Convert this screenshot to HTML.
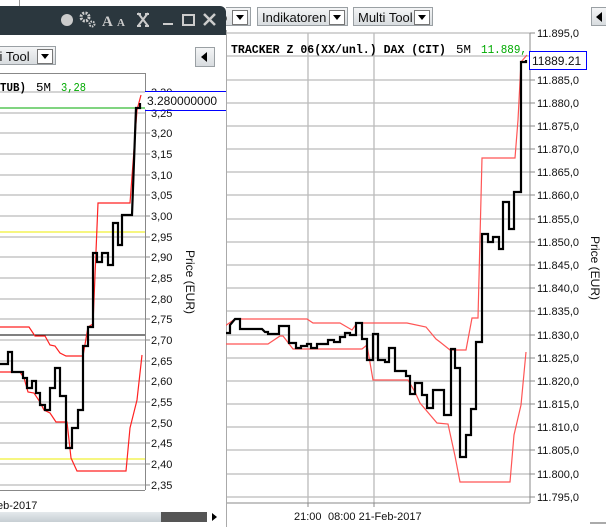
<!DOCTYPE html>
<html><head><style>
body{margin:0;width:606px;height:527px;overflow:hidden;background:#fff;font-family:"Liberation Sans",sans-serif;position:relative}
.a{position:absolute}
.btn{position:absolute;height:19px;border:1px solid #9aa0a4;background:linear-gradient(#f4f5f6,#d8dcdf);font-size:13px;line-height:19px;padding-left:4px;box-sizing:border-box;color:#111}
.dd{position:absolute;right:2px;top:2px;width:14px;height:13px;border:1px solid #777;background:#fff}
.dd:after{content:"";position:absolute;left:3px;top:4px;border:4px solid transparent;border-top:5px solid #000}
</style></head><body>
<div class="a" style="left:19px;top:0;width:1px;height:6px;background:#999"></div>
<div class="a" style="left:226px;top:30px;width:1px;height:497px;background:#aaa"></div>
<div class="btn" style="left:215px;top:7px;width:36px">o<div class="dd"></div></div>
<div class="btn" style="left:257px;top:7px;width:91px">Indikatoren<div class="dd"></div></div>
<div class="btn" style="left:353px;top:7px;width:80px">Multi Tool<div class="dd"></div></div>
<div class="btn" style="left:591px;top:7px;width:20px"></div>
<div class="a" style="left:596px;top:12px;border:5px solid transparent;border-right:6px solid #000;border-left:0"></div>
<svg class="a" style="left:0;top:0" width="606" height="527">
<g stroke="#bbb" stroke-width="1.3">
<line x1="227" x2="530" y1="33" y2="33"/><line x1="227" x2="530" y1="56" y2="56"/><line x1="227" x2="530" y1="80" y2="80"/><line x1="227" x2="530" y1="103" y2="103"/><line x1="227" x2="530" y1="126" y2="126"/><line x1="227" x2="530" y1="149" y2="149"/><line x1="227" x2="530" y1="172" y2="172"/><line x1="227" x2="530" y1="195" y2="195"/><line x1="227" x2="530" y1="219" y2="219"/><line x1="227" x2="530" y1="242" y2="242"/><line x1="227" x2="530" y1="265" y2="265"/><line x1="227" x2="530" y1="288" y2="288"/><line x1="227" x2="530" y1="311" y2="311"/><line x1="227" x2="530" y1="335" y2="335"/><line x1="227" x2="530" y1="358" y2="358"/><line x1="227" x2="530" y1="381" y2="381"/><line x1="227" x2="530" y1="404" y2="404"/><line x1="227" x2="530" y1="427" y2="427"/><line x1="227" x2="530" y1="450" y2="450"/><line x1="227" x2="530" y1="474" y2="474"/><line x1="227" x2="530" y1="497" y2="497"/>
<line x1="308" x2="308" y1="33" y2="503"/><line x1="374" x2="374" y1="33" y2="503"/>
</g>
<line x1="530" x2="530" y1="33" y2="503" stroke="#888"/>
<line x1="227" x2="530" y1="503" y2="503" stroke="#888"/>
<polyline fill="none" stroke="#f55" stroke-width="1.2" points="225,326 235,319 307,319 313,323 340,323 352,330 357,323 407,323 426,327 436,339 440,342 450,350 466,350 472,318 478,318 482,158 515,158 518,120 521,62 527,55"/>
<polyline fill="none" stroke="#f55" stroke-width="1.2" points="225,344 268,344 280,336 283,336 293,349 296,349 362,349 367,345 373,380 408,380 415,392 420,403 437,423 448,424 455,456 460,482 510,482 514,435 521,405 526,352"/>
<polyline fill="none" stroke="#000" stroke-width="2.2" points="225,333 230,333 230,325 235,319 240,319 240,329 262,329 265,332 268,332 268,334 279,334 279,326 289,326 289,343 296,343 296,348 301,348 301,346 307,346 307,344 311,344 311,348 317,348 317,344 328,344 328,340 334,340 334,342 340,342 340,337 345,337 345,333 350,333 350,335 356,335 356,323 362,323 362,339 367,339 367,360 373,360 373,334 378,334 378,360 385,360 385,362 389,362 389,348 395,348 395,371 406,371 406,376 410,376 410,394 415,394 415,383 422,383 422,395 427,395 427,408 433,408 433,390 444,390 444,415 451,415 451,349 455,349 455,368 460,368 460,457 466,457 466,435 471,435 471,409 476,409 476,342 482,342 482,234 488,234 488,242 493,242 493,237 499,237 499,249 503,249 503,202 509,202 509,229 514,229 514,192 521,192 521,62 526,62 526,60"/>
<rect x="529.5" y="51.5" width="57" height="18" fill="#fff" stroke="#00f"/>
<g stroke="#888"><line x1="530" x2="535" y1="33" y2="33"/><line x1="530" x2="535" y1="80" y2="80"/><line x1="530" x2="535" y1="103" y2="103"/><line x1="530" x2="535" y1="126" y2="126"/><line x1="530" x2="535" y1="149" y2="149"/><line x1="530" x2="535" y1="172" y2="172"/><line x1="530" x2="535" y1="195" y2="195"/><line x1="530" x2="535" y1="219" y2="219"/><line x1="530" x2="535" y1="242" y2="242"/><line x1="530" x2="535" y1="265" y2="265"/><line x1="530" x2="535" y1="288" y2="288"/><line x1="530" x2="535" y1="311" y2="311"/><line x1="530" x2="535" y1="335" y2="335"/><line x1="530" x2="535" y1="358" y2="358"/><line x1="530" x2="535" y1="381" y2="381"/><line x1="530" x2="535" y1="404" y2="404"/><line x1="530" x2="535" y1="427" y2="427"/><line x1="530" x2="535" y1="450" y2="450"/><line x1="530" x2="535" y1="474" y2="474"/><line x1="530" x2="535" y1="497" y2="497"/>
<line x1="308" x2="308" y1="503" y2="507"/><line x1="374" x2="374" y1="503" y2="507"/></g>
<g font-size="11" fill="#111" font-family="Liberation Sans">
<text x="537" y="37">11.895,0</text><text x="532" y="65" font-size="12">11889.21</text><text x="537" y="84">11.885,0</text><text x="537" y="107">11.880,0</text><text x="537" y="130">11.875,0</text><text x="537" y="153">11.870,0</text><text x="537" y="176">11.865,0</text><text x="537" y="199">11.860,0</text><text x="537" y="223">11.855,0</text><text x="537" y="246">11.850,0</text><text x="537" y="269">11.845,0</text><text x="537" y="292">11.840,0</text><text x="537" y="315">11.835,0</text><text x="537" y="339">11.830,0</text><text x="537" y="362">11.825,0</text><text x="537" y="385">11.820,0</text><text x="537" y="408">11.815,0</text><text x="537" y="431">11.810,0</text><text x="537" y="454">11.805,0</text><text x="537" y="478">11.800,0</text><text x="537" y="501">11.795,0</text>
<text x="294" y="520">21:00</text><text x="328" y="520">08:00 21-Feb-2017</text>
<text transform="translate(591,236) rotate(90)" font-size="12">Price (EUR)</text>
</g>
<text x="231" y="53" font-family="Liberation Mono" font-weight="bold" font-size="12" fill="#000" textLength="215" lengthAdjust="spacingAndGlyphs">TRACKER Z 06(XX/unl.) DAX (CIT)</text>
<text x="456" y="53" font-family="Liberation Mono" font-size="12" fill="#000" textLength="15" lengthAdjust="spacingAndGlyphs">5M</text>
<text x="481" y="53" font-family="Liberation Mono" font-size="12" fill="#0a0" textLength="46" lengthAdjust="spacingAndGlyphs">11.889,</text>
<line x1="590" x2="606" y1="523" y2="523" stroke="#555"/>
</svg>
<div class="a" style="left:0;top:6px;width:226px;height:521px;background:#fff"></div>
<div class="a" style="left:0;top:6px;width:226px;height:29px;background:#2b373e;border-radius:0 6px 0 0"></div>
<svg class="a" style="left:0;top:6px" width="226" height="29">
<circle cx="67" cy="14" r="6" fill="#ccc"/>
<circle cx="85" cy="11" r="4" fill="none" stroke="#ccc" stroke-width="3" stroke-dasharray="2 1.2"/>
<circle cx="92" cy="18" r="2.5" fill="none" stroke="#ccc" stroke-width="2" stroke-dasharray="1.5 1"/>
<text x="102" y="20" fill="#ccc" font-family="Liberation Serif" font-weight="bold" font-size="15">A</text>
<text x="117" y="20" fill="#ccc" font-family="Liberation Serif" font-weight="bold" font-size="11">A</text>
<path d="M138 7 L148 20 M148 7 L138 20 M137 8 H141 M145 8 H149 M137 20 H141 M145 20 H149" stroke="#ccc" stroke-width="2"/>
<rect x="163" y="17" width="10" height="2" fill="#ccc"/>
<rect x="183" y="9" width="11" height="10" fill="none" stroke="#ccc" stroke-width="2"/>
<path d="M204 8 L215 19 M215 8 L204 19" stroke="#ccc" stroke-width="2.5"/>
</svg>
<div class="btn" style="left:-30px;top:46px;width:86px">Multi Tool<div class="dd"></div></div>
<div class="btn" style="left:195px;top:47px;width:20px;height:20px"></div>
<div class="a" style="left:201px;top:52px;border:5px solid transparent;border-right:6px solid #000;border-left:0"></div>
<svg class="a" style="left:0;top:0" width="226" height="527">
<g stroke="#bbb" stroke-width="1.3">
<line x1="0" x2="145" y1="92" y2="92"/><line x1="0" x2="145" y1="113" y2="113"/><line x1="0" x2="145" y1="133" y2="133"/><line x1="0" x2="145" y1="154" y2="154"/><line x1="0" x2="145" y1="175" y2="175"/><line x1="0" x2="145" y1="195" y2="195"/><line x1="0" x2="145" y1="216" y2="216"/><line x1="0" x2="145" y1="237" y2="237"/><line x1="0" x2="145" y1="257" y2="257"/><line x1="0" x2="145" y1="278" y2="278"/><line x1="0" x2="145" y1="299" y2="299"/><line x1="0" x2="145" y1="319" y2="319"/><line x1="0" x2="145" y1="340" y2="340"/><line x1="0" x2="145" y1="361" y2="361"/><line x1="0" x2="145" y1="381" y2="381"/><line x1="0" x2="145" y1="402" y2="402"/><line x1="0" x2="145" y1="423" y2="423"/><line x1="0" x2="145" y1="443" y2="443"/><line x1="0" x2="145" y1="464" y2="464"/><line x1="0" x2="145" y1="485" y2="485"/>
</g>
<line x1="0" x2="145" y1="73.5" y2="73.5" stroke="#888"/>
<line x1="145.5" x2="145.5" y1="73" y2="490" stroke="#888"/>
<line x1="0" x2="145" y1="490.5" y2="490.5" stroke="#888"/>
<line x1="0" x2="145" y1="232" y2="232" stroke="#ee0"/>
<line x1="0" x2="145" y1="459" y2="459" stroke="#ee0"/>
<line x1="0" x2="145" y1="335" y2="335" stroke="#000"/>
<line x1="0" x2="145" y1="108" y2="108" stroke="#0a0"/>
<polyline fill="none" stroke="#f22" stroke-width="1.2" points="0,327 29,327 35,336 45,336 50,345 55,346 60,353 66,356 83,356 88,327 93,324 98,203 130,203 137,110 141,95"/>
<polyline fill="none" stroke="#f22" stroke-width="1.2" points="0,372 20,372 24,378 28,392 34,393 40,402 44,410 50,413 56,422 67,422 71,458 77,471 126,471 130,428 137,400 142,355"/>
<polyline fill="none" stroke="#000" stroke-width="2.2" points="0,364 8,364 8,352 12,352 12,372 23,372 23,378 27,378 27,388 32,388 32,381 36,381 36,393 40,393 40,405 45,405 45,410 50,410 50,388 55,388 55,368 60,368 60,396 66,396 66,448 72,448 72,428 78,428 78,410 83,410 83,346 88,346 88,327 93,327 93,253 97,253 97,262 102,262 102,253 108,253 108,265 113,265 113,223 118,223 118,245 122,245 122,215 132,215 136,108 140,108 140,103"/>
<g stroke="#888"><line x1="145" x2="150" y1="133" y2="133"/><line x1="145" x2="150" y1="154" y2="154"/><line x1="145" x2="150" y1="175" y2="175"/><line x1="145" x2="150" y1="195" y2="195"/><line x1="145" x2="150" y1="216" y2="216"/><line x1="145" x2="150" y1="237" y2="237"/><line x1="145" x2="150" y1="257" y2="257"/><line x1="145" x2="150" y1="278" y2="278"/><line x1="145" x2="150" y1="299" y2="299"/><line x1="145" x2="150" y1="319" y2="319"/><line x1="145" x2="150" y1="340" y2="340"/><line x1="145" x2="150" y1="361" y2="361"/><line x1="145" x2="150" y1="381" y2="381"/><line x1="145" x2="150" y1="402" y2="402"/><line x1="145" x2="150" y1="423" y2="423"/><line x1="145" x2="150" y1="443" y2="443"/><line x1="145" x2="150" y1="464" y2="464"/><line x1="145" x2="150" y1="485" y2="485"/></g>
<text x="151" y="96" font-size="11" fill="#111">3,30</text>
<text x="151" y="117" font-size="11" fill="#111">3,25</text>
<rect x="145" y="91.5" width="81" height="18" fill="#fff"/>
<line x1="145" x2="226" y1="91.5" y2="91.5" stroke="#00f"/><line x1="145" x2="226" y1="110.5" y2="110.5" stroke="#00f"/>
<g font-size="11" fill="#111" font-family="Liberation Sans">
<text x="147" y="105" font-size="12">3.280000000</text>
<text x="151" y="137">3,20</text><text x="151" y="158">3,15</text><text x="151" y="179">3,10</text><text x="151" y="199">3,05</text><text x="151" y="220">3,00</text><text x="151" y="241">2,95</text><text x="151" y="261">2,90</text><text x="151" y="282">2,85</text><text x="151" y="303">2,80</text><text x="151" y="323">2,75</text><text x="151" y="344">2,70</text><text x="151" y="365">2,65</text><text x="151" y="385">2,60</text><text x="151" y="406">2,55</text><text x="151" y="427">2,50</text><text x="151" y="447">2,45</text><text x="151" y="468">2,40</text><text x="151" y="489">2,35</text>
<text x="-3" y="509">eb-2017</text>
<text transform="translate(186,250) rotate(90)" font-size="12">Price (EUR)</text>
</g>
<text x="0" y="91" font-family="Liberation Mono" font-weight="bold" font-size="12" fill="#000" textLength="26" lengthAdjust="spacingAndGlyphs">TUB)</text>
<text x="36" y="91" font-family="Liberation Mono" font-size="12" fill="#000" textLength="15" lengthAdjust="spacingAndGlyphs">5M</text>
<text x="61" y="91" font-family="Liberation Mono" font-size="12" fill="#0a0" textLength="25" lengthAdjust="spacingAndGlyphs">3,28</text>
<defs><linearGradient id="sg" x1="0" y1="0" x2="0" y2="1"><stop offset="0" stop-color="#e4e9ec"/><stop offset="1" stop-color="#c6ced3"/></linearGradient></defs>
<rect x="0" y="512" width="161" height="10" fill="url(#sg)"/>
<rect x="161" y="512" width="46" height="10" fill="#555"/>
<path d="M212 513 L217 517 L212 521Z" fill="#000"/>
</svg>
</body></html>
